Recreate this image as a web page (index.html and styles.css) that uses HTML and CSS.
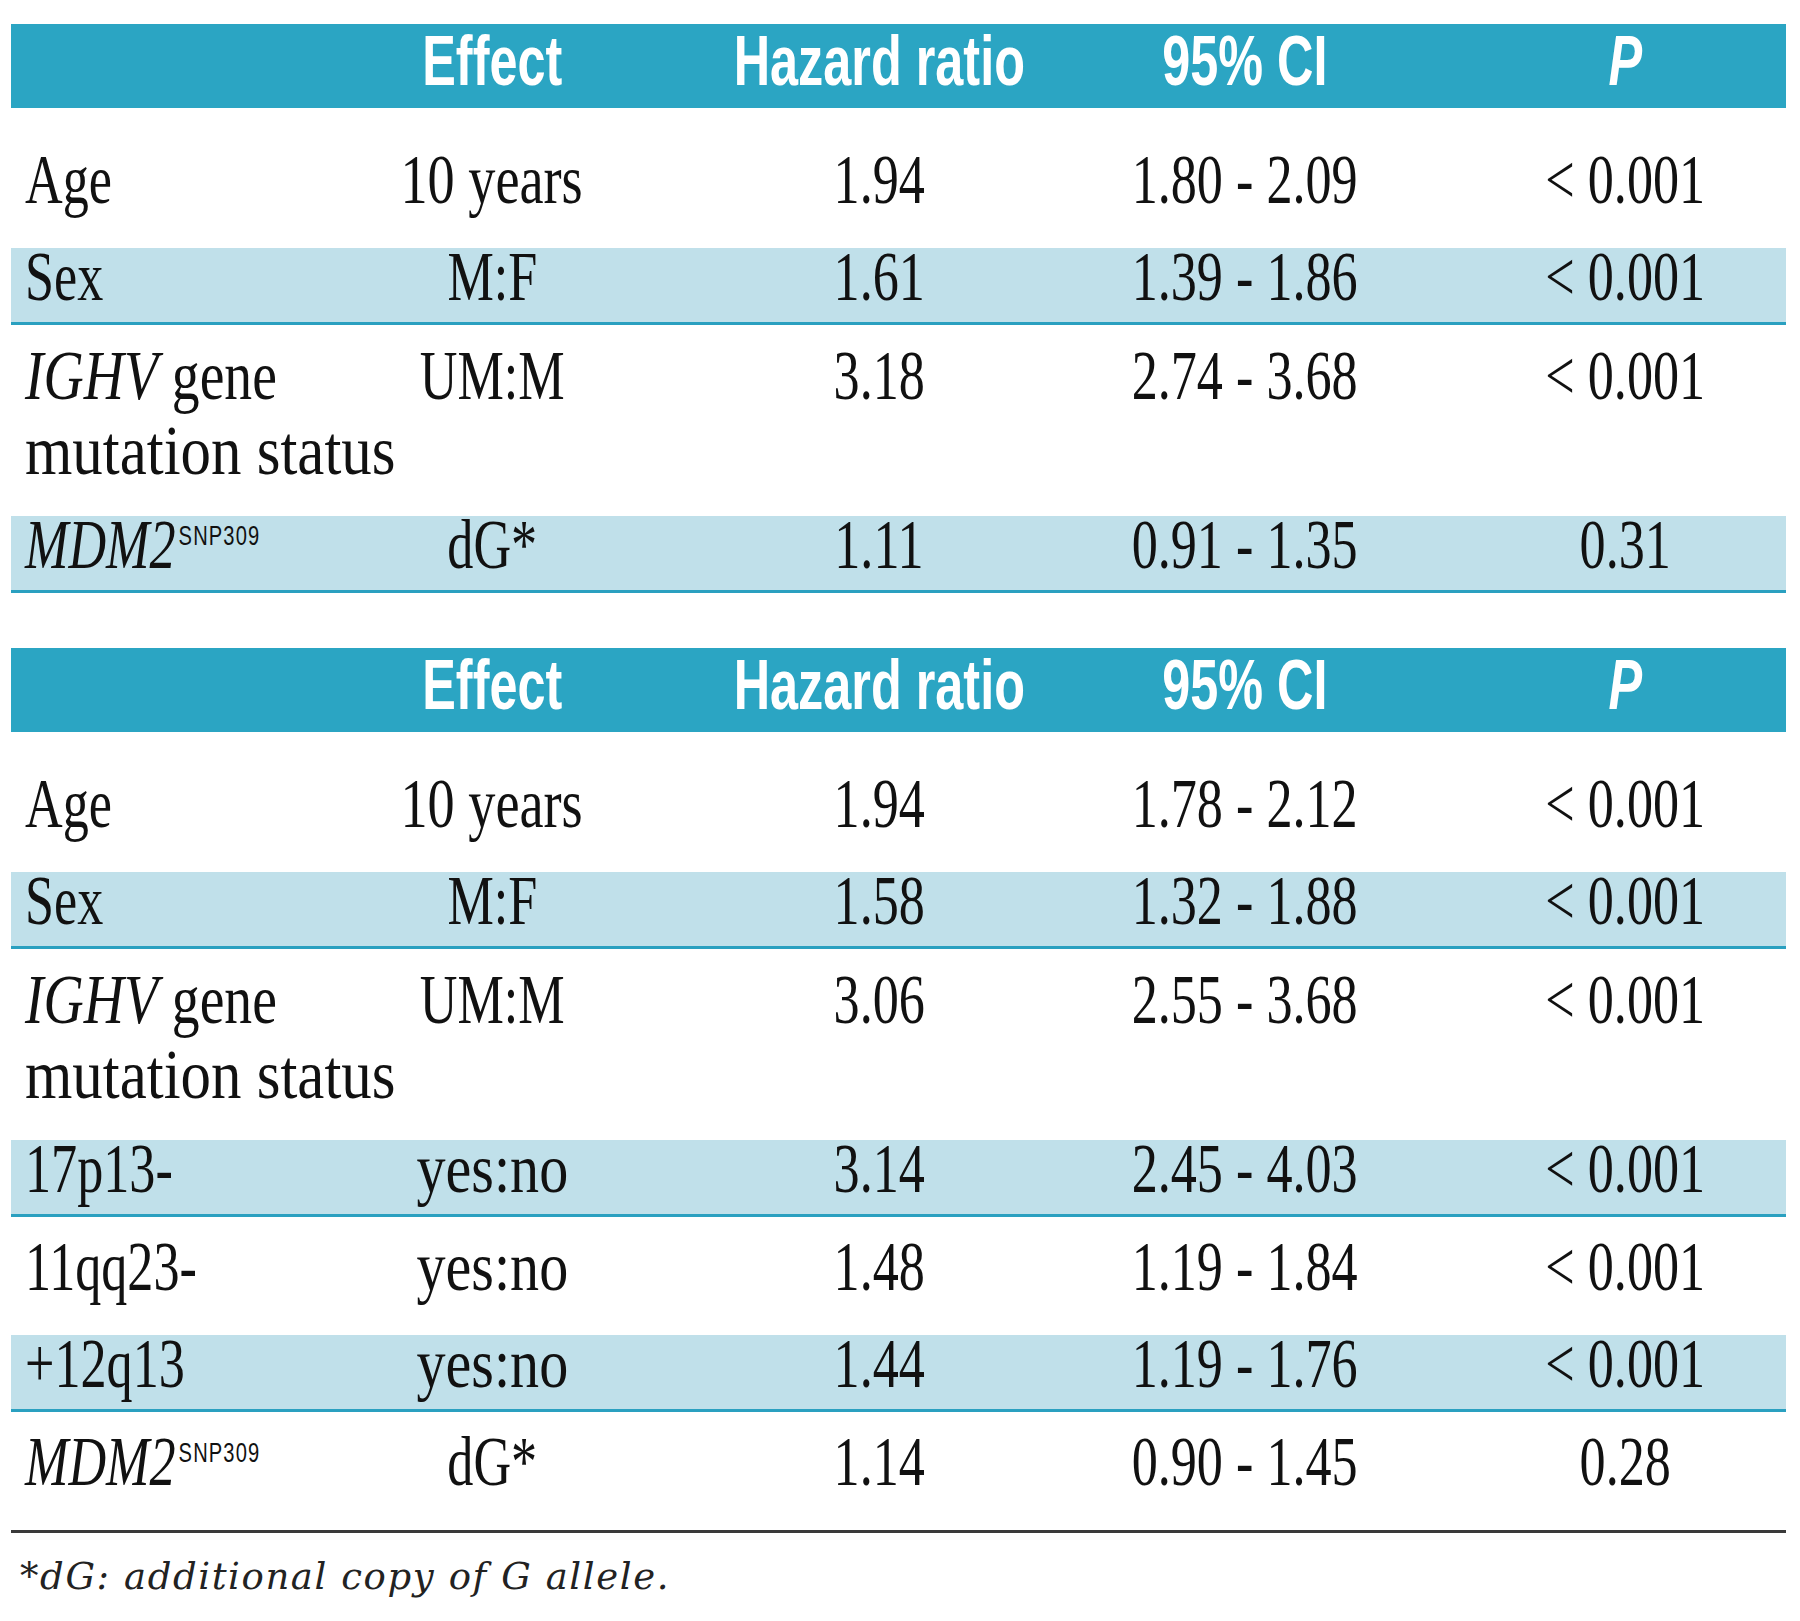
FILE: index.html
```html
<!DOCTYPE html>
<html lang="en">
<head>
<meta charset="utf-8">
<title>Hazard ratios</title>
<link rel="stylesheet" href="styles.css">
</head>
<body>
<div class="page">
  <section class="tbl">
    <div class="row head">
      <div class="c c1"></div>
      <div class="c c2"><span class="h">Effect</span></div>
      <div class="c c3"><span class="h">Hazard ratio</span></div>
      <div class="c c4"><span class="h">95% CI</span></div>
      <div class="c c5"><span class="h"><i>P</i></span></div>
    </div>
    <div class="row first">
      <div class="c c1"><span class="t">Age</span></div>
      <div class="c c2"><span class="t tm">10 years</span></div>
      <div class="c c3"><span class="t">1.94</span></div>
      <div class="c c4"><span class="t">1.80 - 2.09</span></div>
      <div class="c c5"><span class="t">&lt; 0.001</span></div>
    </div>
    <div class="row shade">
      <div class="c c1"><span class="t">Sex</span></div>
      <div class="c c2"><span class="t">M:F</span></div>
      <div class="c c3"><span class="t">1.61</span></div>
      <div class="c c4"><span class="t">1.39 - 1.86</span></div>
      <div class="c c5"><span class="t">&lt; 0.001</span></div>
    </div>
    <div class="row tall">
      <div class="c c1 two"><span class="t tg"><i>IGHV</i> gene</span><span class="t tx">mutation status</span></div>
      <div class="c c2"><span class="t">UM:M</span></div>
      <div class="c c3"><span class="t">3.18</span></div>
      <div class="c c4"><span class="t">2.74 - 3.68</span></div>
      <div class="c c5"><span class="t">&lt; 0.001</span></div>
    </div>
    <div class="row shade">
      <div class="c c1"><span class="t"><i>MDM2</i><sup class="sup">SNP309</sup></span></div>
      <div class="c c2"><span class="t">dG*</span></div>
      <div class="c c3"><span class="t">1.11</span></div>
      <div class="c c4"><span class="t">0.91 - 1.35</span></div>
      <div class="c c5"><span class="t">0.31</span></div>
    </div>
  </section>

  <section class="tbl tbl2">
    <div class="row head">
      <div class="c c1"></div>
      <div class="c c2"><span class="h">Effect</span></div>
      <div class="c c3"><span class="h">Hazard ratio</span></div>
      <div class="c c4"><span class="h">95% CI</span></div>
      <div class="c c5"><span class="h"><i>P</i></span></div>
    </div>
    <div class="row first">
      <div class="c c1"><span class="t">Age</span></div>
      <div class="c c2"><span class="t tm">10 years</span></div>
      <div class="c c3"><span class="t">1.94</span></div>
      <div class="c c4"><span class="t">1.78 - 2.12</span></div>
      <div class="c c5"><span class="t">&lt; 0.001</span></div>
    </div>
    <div class="row shade">
      <div class="c c1"><span class="t">Sex</span></div>
      <div class="c c2"><span class="t">M:F</span></div>
      <div class="c c3"><span class="t">1.58</span></div>
      <div class="c c4"><span class="t">1.32 - 1.88</span></div>
      <div class="c c5"><span class="t">&lt; 0.001</span></div>
    </div>
    <div class="row tall">
      <div class="c c1 two"><span class="t tg"><i>IGHV</i> gene</span><span class="t tx">mutation status</span></div>
      <div class="c c2"><span class="t">UM:M</span></div>
      <div class="c c3"><span class="t">3.06</span></div>
      <div class="c c4"><span class="t">2.55 - 3.68</span></div>
      <div class="c c5"><span class="t">&lt; 0.001</span></div>
    </div>
    <div class="row shade">
      <div class="c c1"><span class="t">17p13-</span></div>
      <div class="c c2"><span class="t tw">yes:no</span></div>
      <div class="c c3"><span class="t">3.14</span></div>
      <div class="c c4"><span class="t">2.45 - 4.03</span></div>
      <div class="c c5"><span class="t">&lt; 0.001</span></div>
    </div>
    <div class="row plain">
      <div class="c c1"><span class="t">11qq23-</span></div>
      <div class="c c2"><span class="t tw">yes:no</span></div>
      <div class="c c3"><span class="t">1.48</span></div>
      <div class="c c4"><span class="t">1.19 - 1.84</span></div>
      <div class="c c5"><span class="t">&lt; 0.001</span></div>
    </div>
    <div class="row shade">
      <div class="c c1"><span class="t">+12q13</span></div>
      <div class="c c2"><span class="t tw">yes:no</span></div>
      <div class="c c3"><span class="t">1.44</span></div>
      <div class="c c4"><span class="t">1.19 - 1.76</span></div>
      <div class="c c5"><span class="t">&lt; 0.001</span></div>
    </div>
    <div class="row plain last">
      <div class="c c1"><span class="t"><i>MDM2</i><sup class="sup">SNP309</sup></span></div>
      <div class="c c2"><span class="t">dG*</span></div>
      <div class="c c3"><span class="t">1.14</span></div>
      <div class="c c4"><span class="t">0.90 - 1.45</span></div>
      <div class="c c5"><span class="t">0.28</span></div>
    </div>
  </section>

  <p class="note">*dG: additional copy of G allele.</p>
</div>
</body>
</html>
```

FILE: styles.css
```css
html, body {
  margin: 0;
  background: #ffffff;
}

.page {
  width: 1775px;
  padding: 24px 14px 0 11px;
}

.tbl2 {
  margin-top: 55px;
}

.row {
  display: grid;
  grid-template-columns: 329px 304px 470px 262px 410px;
  font-family: "Liberation Serif", "Times New Roman", serif;
  font-size: 70px;
  line-height: 57px;
  color: #111111;
}

.c {
  display: flex;
  justify-content: center;
  align-items: flex-start;
  min-width: 0;
}

.c1 {
  justify-content: flex-start;
  padding-left: 14px;
}

.c1.two {
  flex-direction: column;
  align-items: flex-start;
}

.c5 {
  padding-left: 88px;
}

.t {
  display: inline-block;
  white-space: nowrap;
  transform: scaleX(0.745);
  transform-origin: 50% 50%;
}

.tm {
  transform: scaleX(0.775);
}

.tw {
  transform: scaleX(0.83);
}

.tg {
  transform: scaleX(0.795);
}

.tx {
  transform: scaleX(0.87);
}

.c1 .t {
  transform-origin: 0 50%;
}

.t i {
  font-style: italic;
}

.sup {
  font-family: "Liberation Sans", Arial, sans-serif;
  font-size: 27px;
  line-height: 27px;
  vertical-align: 23px;
  letter-spacing: 1.5px;
  margin-left: 4px;
}

/* header band */
.head {
  background: #2ba5c3;
  color: #ffffff;
  font-family: "Liberation Sans", Arial, sans-serif;
  font-weight: 700;
  font-size: 70px;
  line-height: 74px;
  padding-bottom: 10px;
}

.h {
  display: inline-block;
  white-space: nowrap;
  transform: scaleX(0.72);
  transform-origin: 50% 50%;
}

/* body rows */
.first {
  padding: 43px 0 40px;
}

.plain {
  padding: 21px 0 40px;
}

.shade {
  background: #c0e0ea;
  border-bottom: 3px solid #2aa0c0;
  padding-bottom: 17px;
}

.tall {
  line-height: 75px;
  padding: 13px 0 28px;
}

.last {
  border-bottom: 3px solid #3a3a3a;
}

.note {
  margin: 0;
  padding: 19px 0 0 9px;
  font-family: "DejaVu Serif", "Liberation Serif", serif;
  font-style: italic;
  font-size: 37px;
  line-height: 50px;
  letter-spacing: 1.6px;
  color: #222222;
}
```
